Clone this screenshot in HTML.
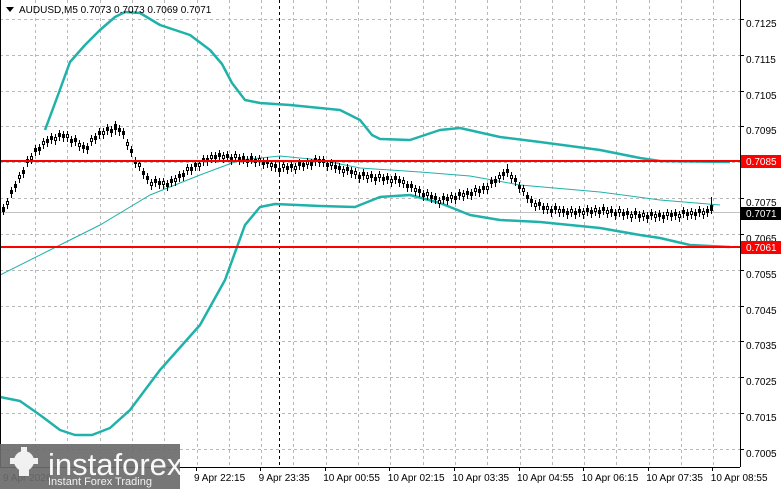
<!DOCTYPE html>
<html><head><meta charset="utf-8"><style>
body{margin:0;background:#fff;width:781px;height:489px;overflow:hidden}
svg text{font-family:"Liberation Sans",sans-serif}
</style></head><body>
<svg width="781" height="489" xmlns="http://www.w3.org/2000/svg">
<rect width="781" height="489" fill="#fff"/>
<path stroke="#b8b8b8" stroke-dasharray="3,3" fill="none" d="M35.5 0V467M67.5 0V467M100.5 0V467M132.5 0V467M164.5 0V467M197.5 0V467M229.5 0V467M261.5 0V467M293.5 0V467M326.5 0V467M358.5 0V467M390.5 0V467M423.5 0V467M455.5 0V467M487.5 0V467M520.5 0V467M552.5 0V467M584.5 0V467M616.5 0V467M649.5 0V467M681.5 0V467M713.5 0V467M0 19.5H740M0 55.5H740M0 91.5H740M0 126.5H740M0 162.5H740M0 198.5H740M0 234.5H740M0 270.5H740M0 306.5H740M0 341.5H740M0 377.5H740M0 413.5H740M0 449.5H740"/>
<line x1="279.5" y1="0" x2="279.5" y2="467" stroke="#000" stroke-dasharray="3,3"/>
<line x1="0" y1="212.5" x2="740" y2="212.5" stroke="#c0c0c0"/>
<polyline fill="none" stroke="#20b2aa" stroke-width="1" points="0,275 50,250 100,225 150,195 200,175 240,160 280,156 320,160 360,168 420,172 470,176 520,185 600,192 660,200 720,205"/>
<polyline fill="none" stroke="#20b2aa" stroke-width="2.5" stroke-linejoin="round" points="45,130 58,95 70,62 85,45 100,30 115,17 125,12 140,13 160,25 190,35 210,50 222,64 232,83 245,100 260,103 290,105 340,110 360,120 372,135 380,139 410,140 440,130 460,128 500,137 540,142 600,150 640,158 660,161 730,162"/>
<polyline fill="none" stroke="#20b2aa" stroke-width="2.5" stroke-linejoin="round" points="0,397 20,401 40,415 60,430 75,435 92,435 110,428 130,410 160,370 200,325 225,280 245,225 260,207 275,204 320,206 355,207 380,197 410,195 440,203 470,215 500,220 540,222 600,228 640,235 660,238 690,245 730,247"/>
<path stroke="#000" stroke-width="1" fill="none" d="M3.5 204v11M7.5 198v11M11.5 187v11M15.5 181v11M19.5 172v11M23.5 167v11M27.5 156v11M31.5 153v11M35.5 145v11M39.5 144v11M43.5 138v11M47.5 136v11M51.5 133v11M55.5 134v11M59.5 130v11M63.5 131v11M67.5 131v11M71.5 136v11M75.5 135v11M79.5 140v11M83.5 142v11M87.5 143v11M91.5 135v11M95.5 133v11M99.5 128v11M103.5 128v11M107.5 124v11M111.5 126v11M115.5 121v14M119.5 125v11M123.5 128v11M127.5 139v11M131.5 146v11M135.5 157v11M139.5 160v11M143.5 168v11M147.5 173v11M151.5 179v11M155.5 176v11M159.5 178v11M163.5 178v11M167.5 180v11M171.5 176v11M175.5 175v11M179.5 171v11M183.5 170v11M187.5 164v11M191.5 164v11M195.5 160v11M199.5 160v11M203.5 155v11M207.5 155v11M211.5 152v11M215.5 152v11M219.5 150v11M223.5 152v11M227.5 151v11M231.5 154v11M235.5 151v11M239.5 154v11M243.5 153v11M247.5 156v11M251.5 153v11M255.5 156v11M259.5 155v11M263.5 158v11M267.5 157v11M271.5 160v11M275.5 161v11M279.5 165v11M283.5 161v11M287.5 163v11M291.5 161v11M295.5 163v11M299.5 159v11M303.5 160v11M307.5 158v11M311.5 159v11M315.5 155v11M319.5 156v11M323.5 156v11M327.5 160v11M331.5 159v11M335.5 162v11M339.5 163v11M343.5 166v11M347.5 164v11M351.5 167v11M355.5 168v11M359.5 172v11M363.5 169v11M367.5 172v11M371.5 171v11M375.5 174v11M379.5 171v11M383.5 174v11M387.5 173v11M391.5 176v11M395.5 173v11M399.5 176v11M403.5 177v11M407.5 181v11M411.5 181v11M415.5 185v11M419.5 186v11M423.5 190v11M427.5 189v11M431.5 192v11M435.5 193v11M439.5 197v11M443.5 193v11M447.5 194v11M451.5 192v11M455.5 193v11M459.5 189v11M463.5 190v11M467.5 188v11M471.5 189v11M475.5 185v11M479.5 186v11M483.5 183v11M487.5 183v11M491.5 177v11M495.5 176v11M499.5 172v11M503.5 169v11M507.5 164v13M511.5 172v11M515.5 175v11M519.5 182v11M523.5 185v11M527.5 192v11M531.5 196v11M535.5 200v11M539.5 199v11M543.5 203v11M547.5 203v11M551.5 206v11M555.5 203v11M559.5 206v11M563.5 206v11M567.5 208v11M571.5 206v11M575.5 208v11M579.5 206v11M583.5 208v11M587.5 205v11M591.5 207v11M595.5 205v11M599.5 207v11M603.5 204v11M607.5 207v11M611.5 206v11M615.5 209v11M619.5 206v11M623.5 209v11M627.5 208v11M631.5 211v11M635.5 208v11M639.5 211v11M643.5 210v11M647.5 212v11M651.5 209v11M655.5 211v11M659.5 210v11M663.5 212v11M667.5 209v11M671.5 210v11M675.5 209v11M679.5 211v11M683.5 207v11M687.5 209v11M691.5 208v11M695.5 209v11M699.5 206v11M703.5 208v11M707.5 206v11M711.5 197v17"/>
<path stroke="#000" stroke-width="3" fill="none" d="M3.5 207v5M7.5 201v4M11.5 190v4M15.5 184v4M19.5 175v4M23.5 170v4M27.5 159v4M31.5 156v4M35.5 148v4M39.5 147v4M43.5 141v4M47.5 139v4M51.5 136v4M55.5 137v4M59.5 133v4M63.5 134v4M67.5 134v4M71.5 139v4M75.5 138v4M79.5 143v4M83.5 145v4M87.5 146v4M91.5 138v4M95.5 136v4M99.5 131v4M103.5 131v4M107.5 127v4M111.5 129v4M115.5 124v6M119.5 128v4M123.5 131v4M127.5 142v4M131.5 149v4M135.5 160v4M139.5 163v4M143.5 171v4M147.5 176v4M151.5 182v4M155.5 179v4M159.5 181v4M163.5 181v4M167.5 183v4M171.5 179v4M175.5 178v4M179.5 174v4M183.5 173v4M187.5 167v4M191.5 167v4M195.5 163v4M199.5 163v4M203.5 158v4M207.5 158v4M211.5 155v4M215.5 155v4M219.5 153v4M223.5 155v4M227.5 154v4M231.5 157v4M235.5 154v4M239.5 157v4M243.5 156v4M247.5 159v4M251.5 156v4M255.5 159v4M259.5 158v4M263.5 161v4M267.5 160v4M271.5 163v4M275.5 164v4M279.5 168v4M283.5 164v4M287.5 166v4M291.5 164v4M295.5 166v4M299.5 162v4M303.5 163v4M307.5 161v4M311.5 162v4M315.5 158v4M319.5 159v4M323.5 159v4M327.5 163v4M331.5 162v4M335.5 165v4M339.5 166v4M343.5 169v4M347.5 167v4M351.5 170v4M355.5 171v4M359.5 175v4M363.5 172v4M367.5 175v4M371.5 174v4M375.5 177v4M379.5 174v4M383.5 177v4M387.5 176v4M391.5 179v4M395.5 176v4M399.5 179v4M403.5 180v4M407.5 184v4M411.5 184v4M415.5 188v4M419.5 189v4M423.5 193v4M427.5 192v4M431.5 195v4M435.5 196v4M439.5 200v4M443.5 196v4M447.5 197v4M451.5 195v4M455.5 196v4M459.5 192v4M463.5 193v4M467.5 191v4M471.5 192v4M475.5 188v4M479.5 189v4M483.5 186v4M487.5 186v4M491.5 180v4M495.5 179v4M499.5 175v4M503.5 172v4M507.5 169v4M511.5 175v4M515.5 178v4M519.5 185v4M523.5 188v4M527.5 195v4M531.5 199v4M535.5 203v4M539.5 202v4M543.5 206v4M547.5 206v4M551.5 209v4M555.5 206v4M559.5 209v4M563.5 209v4M567.5 211v4M571.5 209v4M575.5 211v4M579.5 209v4M583.5 211v4M587.5 208v4M591.5 210v4M595.5 208v4M599.5 210v4M603.5 207v4M607.5 210v4M611.5 209v4M615.5 212v4M619.5 209v4M623.5 212v4M627.5 211v4M631.5 214v4M635.5 211v4M639.5 214v4M643.5 213v4M647.5 215v4M651.5 212v4M655.5 214v4M659.5 213v4M663.5 215v4M667.5 212v4M671.5 213v4M675.5 212v4M679.5 214v4M683.5 210v4M687.5 212v4M691.5 211v4M695.5 212v4M699.5 209v4M703.5 211v4M707.5 209v4M711.5 205v6"/>
<path stroke="#fff" stroke-width="1" fill="none" d="M7.5 202v2M19.5 176v2M31.5 157v2M43.5 142v2M55.5 138v2M67.5 135v2M79.5 144v2M91.5 139v2M103.5 132v2M127.5 143v2M139.5 164v2M151.5 183v2M163.5 182v2M175.5 179v2M187.5 168v2M199.5 164v2M211.5 156v2M223.5 156v2M235.5 155v2M247.5 160v2M259.5 159v2M271.5 164v2M283.5 165v2M295.5 167v2M307.5 162v2M319.5 160v2M331.5 163v2M343.5 170v2M355.5 172v2M367.5 176v2M379.5 175v2M391.5 180v2M403.5 181v2M415.5 189v2M427.5 193v2M439.5 201v2M451.5 196v2M463.5 194v2M475.5 189v2M487.5 187v2M499.5 176v2M511.5 176v2M523.5 189v2M535.5 204v2M547.5 207v2M559.5 210v2M571.5 210v2M583.5 212v2M595.5 209v2M607.5 211v2M619.5 210v2M631.5 215v2M643.5 214v2M655.5 215v2M667.5 213v2M679.5 215v2M691.5 212v2M703.5 212v2"/>
<line x1="0" y1="161" x2="740" y2="161" stroke="#ff0000" stroke-width="2"/>
<line x1="0" y1="247" x2="740" y2="247" stroke="#ff0000" stroke-width="2"/>
<line x1="740.5" y1="0" x2="740.5" y2="467" stroke="#000"/>
<line x1="0" y1="467.5" x2="740" y2="467.5" stroke="#000"/>
<line x1="0.5" y1="0" x2="0.5" y2="467" stroke="#000"/>
<path stroke="#000" d="M740 19.5h4M740 55.5h4M740 91.5h4M740 126.5h4M740 162.5h4M740 198.5h4M740 234.5h4M740 270.5h4M740 306.5h4M740 341.5h4M740 377.5h4M740 413.5h4M740 449.5h4M196.5 467v4M260.5 467v4M325.5 467v4M389.5 467v4M454.5 467v4M519.5 467v4M583.5 467v4M648.5 467v4M712.5 467v4"/>
<g font-size="10" fill="#000">
<text x="746" y="27">0.7125</text><text x="746" y="63">0.7115</text><text x="746" y="99">0.7105</text><text x="746" y="134">0.7095</text><text x="746" y="206">0.7075</text><text x="746" y="242">0.7065</text><text x="746" y="278">0.7055</text><text x="746" y="314">0.7045</text><text x="746" y="349">0.7035</text><text x="746" y="385">0.7025</text><text x="746" y="421">0.7015</text><text x="746" y="457">0.7005</text>
<text x="194" y="481">9 Apr 22:15</text><text x="258.6" y="481">9 Apr 23:35</text><text x="323.2" y="481">10 Apr 00:55</text><text x="387.8" y="481">10 Apr 02:15</text><text x="452.4" y="481">10 Apr 03:35</text><text x="517" y="481">10 Apr 04:55</text><text x="581.6" y="481">10 Apr 06:15</text><text x="646.2" y="481">10 Apr 07:35</text><text x="710.8" y="481">10 Apr 08:55</text>
</g>
<rect x="741" y="155" width="40" height="13" fill="#ff0000"/><text x="746" y="165" font-size="10" fill="#fff">0.7085</text>
<rect x="741" y="207" width="40" height="13" fill="#000"/><text x="746" y="217" font-size="10" fill="#fff">0.7071</text>
<rect x="741" y="241" width="40" height="13" fill="#ff0000"/><text x="746" y="251" font-size="10" fill="#fff">0.7061</text>
<path d="M6 7 L14 7 L10 12 Z" fill="#000"/>
<text x="19" y="13" font-size="10" fill="#000">AUDUSD,M5  0.7073 0.7073 0.7069 0.7071</text>
<text x="3" y="481" font-size="10" fill="#000">9 Apr 2026</text>
<rect x="0" y="444" width="180" height="45" fill="#6b6b6b" opacity="0.92"/>
<g fill="#fff" opacity="0.9"><circle cx="24" cy="461" r="10"/><circle cx="24" cy="461" r="4" fill="#6b6b6b"/><rect x="21" y="447" width="6" height="28"/><rect x="10" y="458" width="28" height="6"/><rect x="19" y="466" width="10" height="10"/></g>
<text x="48" y="475" font-size="31" fill="#fff" opacity="0.95">instaforex</text>
<text x="48" y="485" font-size="11" fill="#fff" opacity="0.9">Instant Forex Trading</text>
</svg>
</body></html>
